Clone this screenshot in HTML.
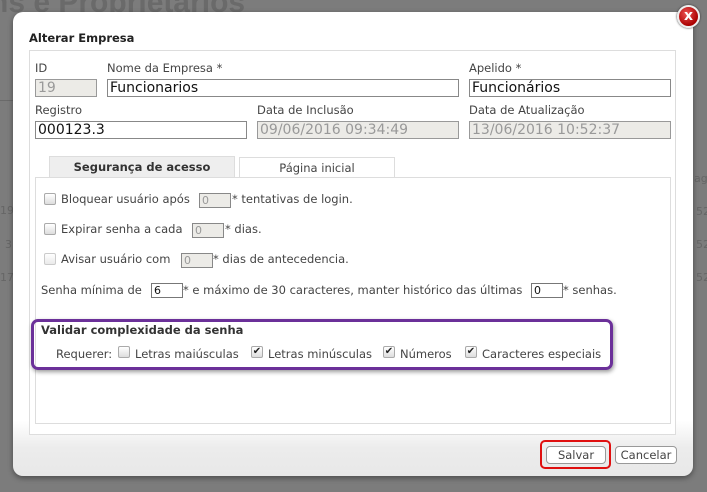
<!DOCTYPE html>
<html><head><meta charset="utf-8"><style>
*{box-sizing:border-box;margin:0;padding:0}
body{width:707px;height:492px;overflow:hidden;background:#7c7c7c;font-family:"DejaVu Sans","Liberation Sans",sans-serif;font-size:11.5px;color:#333;position:relative}
.abs{position:absolute}
.bgt{left:-10px;top:-14px;font:bold 30px "Liberation Sans",sans-serif;color:#6a6a6a;white-space:nowrap}
.dlg{left:13px;top:12px;width:680px;height:464px;border-radius:10px;background:linear-gradient(#fff 0,#fff 88%,#ececec 94%,#e8e8e8 100%);box-shadow:0 2px 6px rgba(0,0,0,.4)}
.fs{left:29px;top:50px;width:647px;height:385px;border:1px solid #ddd;background:#fff}
.panel{left:35px;top:177px;width:636px;height:247px;border:1px solid #ddd}
.lbl{font-size:11.5px;color:#444}
.inp{border:1px solid #888;height:18px;font-size:14px;line-height:16px;padding-left:2px;color:#111;background:#fff}
.dis{background:#ecebe7;color:#999;border-color:#999}
.cb{width:12px;height:12px;border:1px solid #aaa;border-radius:2px;background:linear-gradient(#fff,#ddd)}
.sm{border:1px solid #888;background:#ecebe7;width:32px;height:15px;font-size:11px;color:#999;padding-left:2px;line-height:13px}
.txt{white-space:nowrap;font-size:11.5px;color:#444}
.btn{border:1px solid #999;border-radius:4px;background:#fff;height:18px;font-size:11.5px;color:#444;text-align:center;line-height:16px}
</style></head><body>
<div class="abs bgt">ns e Proprietários</div>
<div class="abs" style="left:0;top:100px;width:13px;height:1px;background:#6a6a6a"></div>
<div class="abs" style="left:0;top:204px;font-size:11px;color:#666">19</div>
<div class="abs" style="left:5px;top:238px;font-size:11px;color:#666">3</div>
<div class="abs" style="left:0;top:271px;font-size:11px;color:#666">17</div>
<div class="abs" style="left:694px;top:172px;font-size:11px;color:#666">ag</div>
<div class="abs" style="left:696px;top:205px;font-size:11px;color:#666">52</div>
<div class="abs" style="left:696px;top:238px;font-size:11px;color:#666">52</div>
<div class="abs" style="left:696px;top:271px;font-size:11px;color:#666">52</div>
<div class="abs dlg"></div>
<div class="abs" style="left:677px;top:5px;width:23px;height:23px;border-radius:50%;background:radial-gradient(circle at 40% 35%,#e55,#a00 70%);border:2px solid #eee;box-shadow:0 0 2px #333;color:#fff;font:bold 14px 'DejaVu Sans',sans-serif;text-align:center;line-height:19px">x</div>
<div class="abs" style="left:29px;top:31px;font-weight:bold;font-size:11.5px;color:#222">Alterar Empresa</div>
<div class="abs fs"></div>
<div class="abs lbl" style="left:35px;top:61px">ID</div>
<div class="abs lbl" style="left:107px;top:61px">Nome da Empresa *</div>
<div class="abs lbl" style="left:469px;top:61px">Apelido *</div>
<div class="abs inp dis" style="left:35px;top:79px;width:62px">19</div>
<div class="abs inp" style="left:107px;top:79px;width:352px">Funcionarios</div>
<div class="abs inp" style="left:469px;top:79px;width:202px">Funcionários</div>
<div class="abs lbl" style="left:35px;top:103px">Registro</div>
<div class="abs lbl" style="left:257px;top:103px">Data de Inclusão</div>
<div class="abs lbl" style="left:469px;top:103px">Data de Atualização</div>
<div class="abs inp" style="left:35px;top:121px;width:212px">000123.3</div>
<div class="abs inp dis" style="left:257px;top:121px;width:202px">09/06/2016 09:34:49</div>
<div class="abs inp dis" style="left:469px;top:121px;width:202px">13/06/2016 10:52:37</div>
<div class="abs" style="left:49px;top:156px;width:186px;height:22px;background:#eee;border:1px solid #ddd;border-bottom:none;text-align:center;font-weight:bold;line-height:20px;color:#333">Segurança de acesso</div>
<div class="abs" style="left:239px;top:157px;width:156px;height:20px;background:#fff;border:1px solid #ddd;border-bottom:none;text-align:center;line-height:20px;color:#444">Página inicial</div>
<div class="abs panel"></div>
<div class="abs cb" style="left:44px;top:193px"></div>
<div class="abs txt" style="left:61px;top:192px">Bloquear usuário após</div>
<div class="abs sm" style="left:199px;top:193px">0</div>
<div class="abs txt" style="left:232px;top:192px">* tentativas de login.</div>
<div class="abs cb" style="left:44px;top:223px"></div>
<div class="abs txt" style="left:61px;top:222px">Expirar senha a cada</div>
<div class="abs sm" style="left:192px;top:223px">0</div>
<div class="abs txt" style="left:225px;top:222px">* dias.</div>
<div class="abs cb" style="left:44px;top:253px;opacity:.6"></div>
<div class="abs txt" style="left:61px;top:252px">Avisar usuário com</div>
<div class="abs sm" style="left:181px;top:253px">0</div>
<div class="abs txt" style="left:213px;top:252px">* dias de antecedencia.</div>
<div class="abs txt" style="left:41px;top:283px">Senha mínima de</div>
<div class="abs sm" style="left:151px;top:283px;background:#fff;color:#111;border-color:#777;width:32px">6</div>
<div class="abs txt" style="left:183px;top:283px">* e máximo de 30 caracteres, manter histórico das últimas</div>
<div class="abs sm" style="left:531px;top:283px;background:#fff;color:#111;border-color:#777">0</div>
<div class="abs txt" style="left:563px;top:283px">* senhas.</div>
<div class="abs" style="left:31px;top:319px;width:582px;height:51px;border:3px solid #6b3099;border-radius:7px;box-shadow:1px 2px 4px rgba(0,0,0,.4)"></div>
<div class="abs txt" style="left:41px;top:323px;font-weight:bold;color:#333">Validar complexidade da senha</div>
<div class="abs txt" style="left:56px;top:347px">Requerer:</div>
<div class="abs cb" style="left:118px;top:346px"></div>
<div class="abs txt" style="left:135px;top:347px">Letras maiúsculas</div>
<div class="abs cb" style="left:251px;top:346px;font-size:10px;line-height:9px;text-align:center;color:#222">✔</div>
<div class="abs txt" style="left:268px;top:347px">Letras minúsculas</div>
<div class="abs cb" style="left:383px;top:346px;font-size:10px;line-height:9px;text-align:center;color:#222">✔</div>
<div class="abs txt" style="left:400px;top:347px">Números</div>
<div class="abs cb" style="left:465px;top:346px;font-size:10px;line-height:9px;text-align:center;color:#222">✔</div>
<div class="abs txt" style="left:482px;top:347px">Caracteres especiais</div>
<div class="abs" style="left:540px;top:440px;width:71px;height:29px;border:2px solid #e01010;border-radius:5px"></div>
<div class="abs btn" style="left:546px;top:446px;width:60px">Salvar</div>
<div class="abs btn" style="left:615px;top:446px;width:62px">Cancelar</div>
</body></html>
